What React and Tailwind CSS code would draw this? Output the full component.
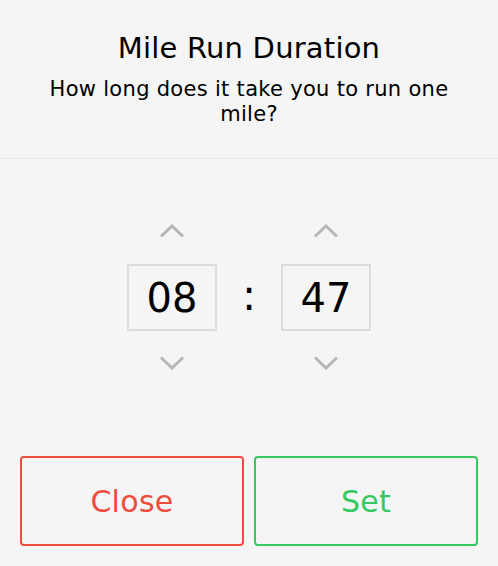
import React from "react";

function Chevron({ up }) {
  return (
    <svg width="26" height="14" viewBox="0 0 26 14" className="block">
      <path
        d={up ? "M2 12.5 L13 2 L24 12.5" : "M2 1.5 L13 12 L24 1.5"}
        fill="none"
        stroke="#b6b6b6"
        strokeWidth="3"
        strokeLinejoin="miter"
      />
    </svg>
  );
}

function Spinner({ value }) {
  return (
    <div className="flex flex-col items-center w-[90px]">
      <Chevron up />
      <div className="mt-[26px] w-[90px] h-[67px] border-2 border-[#dcdcdc] flex items-center justify-center text-[40px] text-black leading-none">
        {value}
      </div>
      <div className="mt-[25px]">
        <Chevron />
      </div>
    </div>
  );
}

export default function App() {
  return (
    <div className="w-[498px] h-[566px] bg-[#f5f5f5] flex flex-col font-['DejaVu_Sans',sans-serif] text-black">
      <div className="h-[159px] border-b border-[#ebebeb] flex flex-col items-center pt-[30px]">
        <h1 className="text-[29px] leading-[36px] tracking-[0.2px]">Mile Run Duration</h1>
        <p className="mt-[11px] text-[21px] leading-[25px] tracking-[0.3px] text-center">
          How long does it take you to run one
          <br />
          mile?
        </p>
      </div>
      <div className="flex justify-center items-start pt-[65px] gap-[22px]">
        <Spinner value="08" />
        <div className="w-[20px] h-[67px] mt-[40px] flex items-center justify-center text-[42px] leading-none pb-[4px]">
          :
        </div>
        <Spinner value="47" />
      </div>
      <div className="mt-auto flex gap-[10px] px-[20px] pb-[20px]">
        <button className="flex-1 h-[90px] border-2 border-[#f04b3d] rounded-[4px] text-[#f04b3d] text-[30px] tracking-[0.3px]">
          Close
        </button>
        <button className="flex-1 h-[90px] border-2 border-[#37c961] rounded-[4px] text-[#37c961] text-[30px] tracking-[0.3px]">
          Set
        </button>
      </div>
    </div>
  );
}
